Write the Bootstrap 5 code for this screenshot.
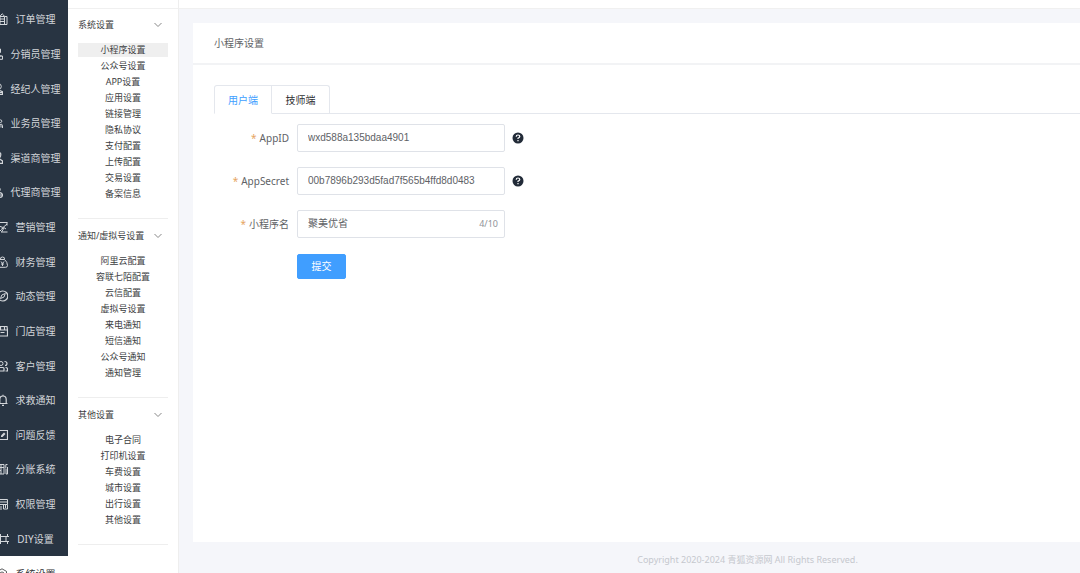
<!DOCTYPE html>
<html lang="zh-CN">
<head>
<meta charset="utf-8">
<meta name="viewport" content="width=device-width, initial-scale=1">
<title>小程序设置</title>
<link href="https://cdn.jsdelivr.net/npm/bootstrap@5.3.0/dist/css/bootstrap.min.css" rel="stylesheet">
<style>
body{font-family:"Noto Sans","Noto Sans CJK SC",sans-serif;font-size:10px;line-height:16px;color:#606266;background:#f5f6fa}
a{color:inherit;text-decoration:none}
svg{flex:none;fill:none;stroke:currentColor}
.side{width:68px;background:#fff}
.side-inner{margin-left:-17px}
.side-dark{background:#283442;color:#d3d6da;height:556px;padding-top:2px}
.side-link{gap:8px;white-space:nowrap}
.side-link svg{width:12px;height:12px}
.side-current{height:35px;color:#303133}
.topbar{height:8px;box-shadow:0 1px 0 #f0f0f0}
.submenu{width:111px;border-right:1px solid #eee;font-size:9px;color:#3c3e42}
.group{margin:0 10px;padding-bottom:16px;border-bottom:1px solid #eee}
.group-title{height:34px;color:inherit;font-size:9px}
.group-title svg{width:8px;height:8px;margin-right:6px;stroke:#888}
.group a{display:block;height:16px;line-height:14px;text-align:center;border:solid #fff;border-width:1px 0}
.group a.active{background:#efefef}
.panel{margin:15px 0 0 14px}
.panel-title{height:42px;padding:0 21px;border-bottom:2px solid #f2f3f5}
.panel-main{padding:20px 0 20px 21px}
.nav-tabs{--bs-nav-tabs-border-color:#e4e7ed;--bs-nav-tabs-border-radius:3px}
.nav-tabs .nav-link{height:29px;width:58px;padding:0;color:#303133;border-color:#e4e7ed;border-bottom-color:transparent}
.nav-tabs .nav-link.active{color:#409eff;border-color:#e4e7ed #e4e7ed #fff;border-radius:3px 0 0 0}
.nav-tabs .nav-link:not(.active){border-left:0;border-radius:0 3px 0 0}
.fields{padding-top:10px}
.field-row{margin-bottom:15px}
.field-label{width:75px;margin-right:8px;text-align:right}
.field-label span{color:#e6a562;margin-right:3px}
.box{width:208px;height:28px;border:1px solid #dfe2e8;border-radius:2px;padding:0 6px 0 10px}
.box input{border:0;outline:0;padding:0;min-width:0;color:#606266;font-family:"Liberation Sans","Noto Sans CJK SC",sans-serif;font-size:10px}
.counter{font-size:9px;color:#909399}
.help{width:12px;height:12px;margin-left:7px;stroke:none}
.submit{width:49px;height:25px;margin:1px 0 0 83px;padding:0;border-radius:2px;font-size:10px;background:#409eff;border-color:#409eff;color:#fff}
.foot{height:31px;padding:4px 0 0 236px;font-size:9px;color:#c5c8ce}
</style>
</head>
<body>
<div class="d-flex vh-100 overflow-hidden">
  <nav class="side flex-shrink-0 overflow-hidden" aria-label="主菜单">
    <div class="side-inner">
      <div class="side-dark d-flex flex-column">
        <a href="#" class="side-link d-flex flex-fill align-items-center justify-content-center"><svg viewBox="0 0 12 12"><path d="M3.500 3.500H1.500v8h9.500v-8H9M4 3.500l1-1.500 1.200-1.200L7.500 2l1 1.500zM4 6h4.500M4 8.500h4.500M4 3.500v8M8.500 3.500v8"/></svg>订单管理</a>
        <a href="#" class="side-link d-flex flex-fill align-items-center justify-content-center"><svg viewBox="0 0 12 12"><path d="M6 1h3.500v3.500H6zM8.500 4v4M2 8h8.500M1 8.500h3v3H1zM8.500 8h3v3.300h-3z"/></svg>分销员管理</a>
        <a href="#" class="side-link d-flex flex-fill align-items-center justify-content-center"><svg viewBox="0 0 12 12"><circle cx="7.500" cy="3.500" r="2.800"/><path d="M2 11.300q0-4 5-4.500l4.500 2v2.500zM9 9.500h2.500" stroke-width="1.200"/></svg>经纪人管理</a>
        <a href="#" class="side-link d-flex flex-fill align-items-center justify-content-center"><svg viewBox="0 0 12 12"><circle cx="5" cy="4" r="2"/><circle cx="9.500" cy="4.200" r="1.300"/><path d="M1 10.500V8.500q3-2.500 6 0v2M8.500 10.500V7.500q3-1 3 1v2.500M10 8v2.500"/></svg>业务员管理</a>
        <a href="#" class="side-link d-flex flex-fill align-items-center justify-content-center"><svg viewBox="0 0 12 12"><path d="M5 1h4.500q1 3-1.500 5.500l3.500 2.500v2.300H2V9L5.500 6.500Q4 4 5 1z" stroke-width="1.200"/></svg>渠道商管理</a>
        <a href="#" class="side-link d-flex flex-fill align-items-center justify-content-center"><svg viewBox="0 0 12 12"><circle cx="7.500" cy="3.500" r="1.800"/><path d="M2 11.300V8l6-1.500q3.500.5 3.500 2.500 0 2.300-2.500 2.300zM9 9h2" stroke-width="1.200"/></svg>代理商管理</a>
        <a href="#" class="side-link d-flex flex-fill align-items-center justify-content-center"><svg viewBox="0 0 12 12"><path d="M1 1.500h10.500M2 3v6.500h3M3 5l4 1.500L11 3M11 1.500v3M5 8.500l3-2 2 1.500M8 7l-2.500 4M5 11h6.500"/></svg>营销管理</a>
        <a href="#" class="side-link d-flex flex-fill align-items-center justify-content-center"><svg viewBox="0 0 12 12"><path d="M4.500 3.500Q4 1 6.500 1T8.500 3.500M4 3.500Q1 6 1 9.500q0 1.800 2 1.800h6.500q2 0 2-1.800Q11.500 6 8.500 3.500zM5 5.500l1.500 2L8 5.500M5 8h3M6.500 7.500v2.500"/></svg>财务管理</a>
        <a href="#" class="side-link d-flex flex-fill align-items-center justify-content-center"><svg viewBox="0 0 12 12"><circle cx="6.800" cy="6" r="5" stroke-width="1.200"/><path d="M9.300 3.500L8 7 4.500 8.500 5.800 5z"/></svg>动态管理</a>
        <a href="#" class="side-link d-flex flex-fill align-items-center justify-content-center"><svg viewBox="0 0 12 12"><path d="M1.500 1.500h9.500L11.500 5H1zM2 5v6h9.500V5M4.500 2v3M8.500 2v3M4.500 7.500h4" stroke-width="1.200"/></svg>门店管理</a>
        <a href="#" class="side-link d-flex flex-fill align-items-center justify-content-center"><svg viewBox="0 0 12 12"><circle cx="5" cy="3.500" r="2"/><path d="M1 11V8.500q0-1 1.500-1h4.500q1 0 1 1V11zM8.500 1.500q2.500 0 2.500 2t-2 2M9.500 7.500q2 0 2 1.500v2H9.500" stroke-width="1.200"/></svg>客户管理</a>
        <a href="#" class="side-link d-flex flex-fill align-items-center justify-content-center"><svg viewBox="0 0 12 12"><path d="M7 .8v1.200M3.800 9.500V5.500Q3.800 2 7 2t3.200 3.500v4M2.500 9.500h9M6 11.300h2" stroke-width="1.200"/></svg>求救通知</a>
        <a href="#" class="side-link d-flex flex-fill align-items-center justify-content-center"><svg viewBox="0 0 12 12"><path d="M1 1.500h10.500v9H1z" stroke-width="1.200"/><path d="M5 8V6.500l3-3L9.500 5 6.500 8z" fill="currentColor" stroke="none"/></svg>问题反馈</a>
        <a href="#" class="side-link d-flex flex-fill align-items-center justify-content-center"><svg viewBox="0 0 12 12"><path d="M1 1.500h7M2 4.500h6M2 7.500h3M5 2v9M8 1.500v9.500M1 11h7M11.500 1.500H9.800v4M10 6v5h1.500V4"/></svg>分账系统</a>
        <a href="#" class="side-link d-flex flex-fill align-items-center justify-content-center"><svg viewBox="0 0 12 12"><path d="M11.500 6V1.500H1v9.500h5M1 4h10.500M3 6.500h8.500M3 9h3M7.500 6.500h4V11h-4zM9.500 7v3"/></svg>权限管理</a>
        <a href="#" class="side-link d-flex flex-fill align-items-center justify-content-center"><svg viewBox="0 0 12 12"><path d="M0 3.500h12M0 8.500h12M3.500 1v2.500M10.500 1v2.500M3.500 8.500v2.500M10.500 8.500v2.500M3.500 3.500v5M9 3.500v5"/></svg>DIY设置</a>
      </div>
      <a href="#" class="side-link side-current d-flex align-items-center justify-content-center" aria-current="page"><svg viewBox="0 0 12 12" stroke-width=".8"><path d="M6 .8l4.500 2.600v5.200L6 11.200 1.500 8.600V3.400z"/><circle cx="6" cy="6" r="2"/></svg>系统设置</a>
    </div>
  </nav>

  <nav class="submenu flex-shrink-0 bg-white" aria-label="设置菜单">
    <div class="topbar"></div>
    <div class="group">
      <button class="group-title btn p-0 border-0 w-100 d-flex align-items-center justify-content-between">系统设置<svg viewBox="0 0 8 8"><path d="M.5 2L4 5.500 7.500 2"/></svg></button>
      <a href="#" class="active">小程序设置</a><a href="#">公众号设置</a><a href="#">APP设置</a><a href="#">应用设置</a><a href="#">链接管理</a><a href="#">隐私协议</a><a href="#">支付配置</a><a href="#">上传配置</a><a href="#">交易设置</a><a href="#">备案信息</a>
    </div>
    <div class="group">
      <button class="group-title btn p-0 border-0 w-100 d-flex align-items-center justify-content-between">通知/虚拟号设置<svg viewBox="0 0 8 8"><path d="M.5 2L4 5.500 7.500 2"/></svg></button>
      <a href="#">阿里云配置</a><a href="#">容联七陌配置</a><a href="#">云信配置</a><a href="#">虚拟号设置</a><a href="#">来电通知</a><a href="#">短信通知</a><a href="#">公众号通知</a><a href="#">通知管理</a>
    </div>
    <div class="group">
      <button class="group-title btn p-0 border-0 w-100 d-flex align-items-center justify-content-between">其他设置<svg viewBox="0 0 8 8"><path d="M.5 2L4 5.500 7.500 2"/></svg></button>
      <a href="#">电子合同</a><a href="#">打印机设置</a><a href="#">车费设置</a><a href="#">城市设置</a><a href="#">出行设置</a><a href="#">其他设置</a>
    </div>
  </nav>

  <div class="flex-fill d-flex flex-column">
    <div class="topbar bg-white flex-shrink-0"></div>
    <main class="panel bg-white flex-fill">
      <div class="panel-title d-flex align-items-center">小程序设置</div>
      <div class="panel-main">
        <ul class="nav nav-tabs" role="tablist">
          <li class="nav-item" role="presentation"><button class="nav-link active" role="tab" aria-selected="true">用户端</button></li>
          <li class="nav-item" role="presentation"><button class="nav-link" role="tab" aria-selected="false">技师端</button></li>
        </ul>
        <form class="fields">
          <div class="field-row d-flex align-items-center">
            <label class="field-label" for="appid"><span>*</span>AppID</label>
            <div class="box d-flex align-items-center"><input id="appid" class="flex-fill" type="text" value="wxd588a135bdaa4901"></div>
            <svg class="help" viewBox="0 0 12 12" role="img" aria-label="帮助"><circle cx="6" cy="6" r="5.500" fill="#222b38"/><path d="M4.200 4.800Q4.200 3 6 3t1.800 1.500Q7.800 5.500 6 6.200V7M6 8v1.300" fill="none" stroke="#fff" stroke-width="1.200"/></svg>
          </div>
          <div class="field-row d-flex align-items-center">
            <label class="field-label" for="secret"><span>*</span>AppSecret</label>
            <div class="box d-flex align-items-center"><input id="secret" class="flex-fill" type="text" value="00b7896b293d5fad7f565b4ffd8d0483"></div>
            <svg class="help" viewBox="0 0 12 12" role="img" aria-label="帮助"><circle cx="6" cy="6" r="5.500" fill="#222b38"/><path d="M4.200 4.800Q4.200 3 6 3t1.800 1.500Q7.800 5.500 6 6.200V7M6 8v1.300" fill="none" stroke="#fff" stroke-width="1.200"/></svg>
          </div>
          <div class="field-row d-flex align-items-center">
            <label class="field-label" for="appname"><span>*</span>小程序名</label>
            <div class="box d-flex align-items-center"><input id="appname" class="flex-fill" type="text" maxlength="10" value="聚美优省"><span class="counter">4/10</span></div>
          </div>
          <button class="submit btn" type="button">提交</button>
        </form>
      </div>
    </main>
    <footer class="foot flex-shrink-0 d-flex align-items-center justify-content-center">Copyright 2020-2024 青狐资源网 All Rights Reserved.</footer>
  </div>
</div>
<script src="https://cdn.jsdelivr.net/npm/bootstrap@5.3.0/dist/js/bootstrap.bundle.min.js"></script>
</body>
</html>
